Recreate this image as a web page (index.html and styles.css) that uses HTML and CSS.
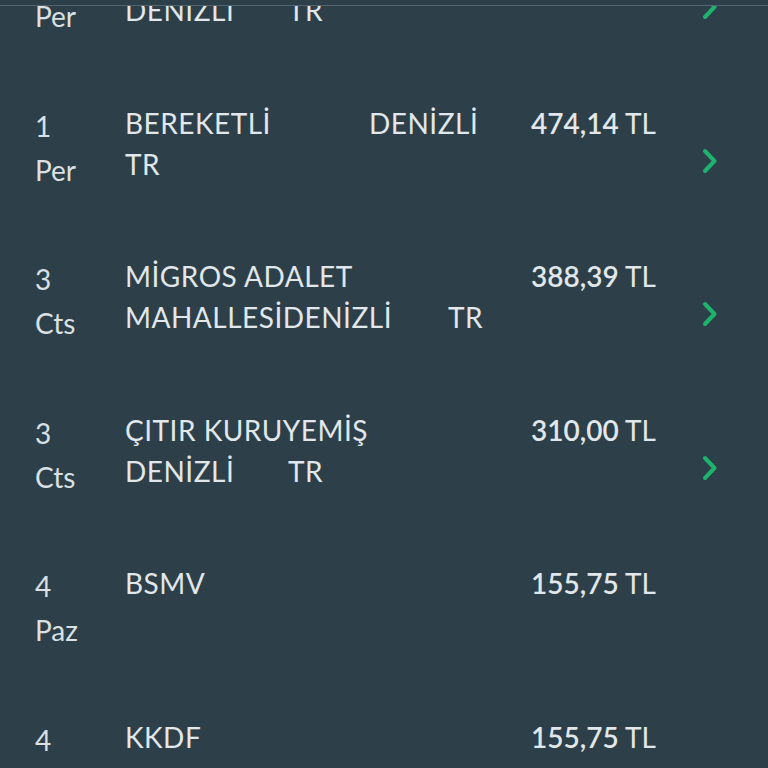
FILE: index.html
```html
<!DOCTYPE html>
<html lang="tr">
<head>
<meta charset="utf-8">
<link rel="stylesheet" href="styles.css">
</head>
<body>
<div class="topbar"></div>
<div class="viewport">
  <div class="list">
    <div class="row">
      <div class="day"><div>5</div><div>Per</div></div>
      <div class="name"><div>BEREKETLİ</div><div><span class="w163">DENİZLİ</span>TR</div></div>
      <div class="amount"><b>474,14</b> TL</div>
      <div class="chev"><svg viewBox="0 0 16 26" width="16" height="26"><path d="M3 3 L12.5 13 L3 23"/></svg></div>
    </div>
    <div class="row">
      <div class="day"><div>1</div><div>Per</div></div>
      <div class="name"><div><span class="w244">BEREKETLİ</span>DENİZLİ</div><div>TR</div></div>
      <div class="amount"><b>474,14</b> TL</div>
      <div class="chev"><svg viewBox="0 0 16 26" width="16" height="26"><path d="M3 3 L12.5 13 L3 23"/></svg></div>
    </div>
    <div class="row">
      <div class="day"><div>3</div><div>Cts</div></div>
      <div class="name"><div>MİGROS ADALET</div><div><span class="w323">MAHALLESİDENİZLİ</span>TR</div></div>
      <div class="amount"><b>388,39</b> TL</div>
      <div class="chev"><svg viewBox="0 0 16 26" width="16" height="26"><path d="M3 3 L12.5 13 L3 23"/></svg></div>
    </div>
    <div class="row">
      <div class="day"><div>3</div><div>Cts</div></div>
      <div class="name"><div>ÇITIR KURUYEMİŞ</div><div><span class="w163">DENİZLİ</span>TR</div></div>
      <div class="amount"><b>310,00</b> TL</div>
      <div class="chev"><svg viewBox="0 0 16 26" width="16" height="26"><path d="M3 3 L12.5 13 L3 23"/></svg></div>
    </div>
    <div class="row">
      <div class="day"><div>4</div><div>Paz</div></div>
      <div class="name"><div>BSMV</div></div>
      <div class="amount"><b>155,75</b> TL</div>
      <div class="chev"></div>
    </div>
    <div class="row">
      <div class="day"><div>4</div><div>Paz</div></div>
      <div class="name"><div>KKDF</div></div>
      <div class="amount"><b>155,75</b> TL</div>
      <div class="chev"></div>
    </div>
  </div>
</div>
</body>
</html>
```
FILE: styles.css
```css
html, body {
  margin: 0;
  padding: 0;
  background: #2d3f48;
}
body {
  width: 768px;
  height: 768px;
  overflow: hidden;
  font-family: Lato, "Noto Sans", sans-serif;
  color: #e1e7ea;
  font-size: 28px;
}
.topbar {
  height: 5px;
  border-bottom: 1.5px solid #52646d;
  background: #2d3f48;
}
.viewport {
  height: 761.5px;
  overflow: hidden;
}
.list {
  margin-top: -56px;
  display: flex;
  flex-direction: column;
}
.row {
  height: 153.5px;
  display: grid;
  grid-template-columns: 90px 1fr auto 62px;
  padding-left: 35px;
  padding-right: 50px;
  line-height: 44px;
  box-sizing: border-box;
}
.day {
  color: #dae0e3;
}
.name {
  white-space: nowrap;
  letter-spacing: 0.5px;
  line-height: 41px;
  margin-top: -1px;
}
.w163, .w244, .w323 {
  display: inline-block;
}
.w163 { width: 163px; }
.w244 { width: 244px; }
.w323 { width: 323px; }
.amount {
  white-space: nowrap;
  text-align: right;
  line-height: 41px;
  margin-top: -1px;
}
.amount b {
  font-weight: 600;
}
.chev {
  display: flex;
  justify-content: flex-end;
  padding-top: 44px;
}
.chev svg {
  display: block;
  fill: none;
  stroke: #1db36c;
  stroke-width: 4;
  stroke-linecap: round;
  stroke-linejoin: round;
}
```
